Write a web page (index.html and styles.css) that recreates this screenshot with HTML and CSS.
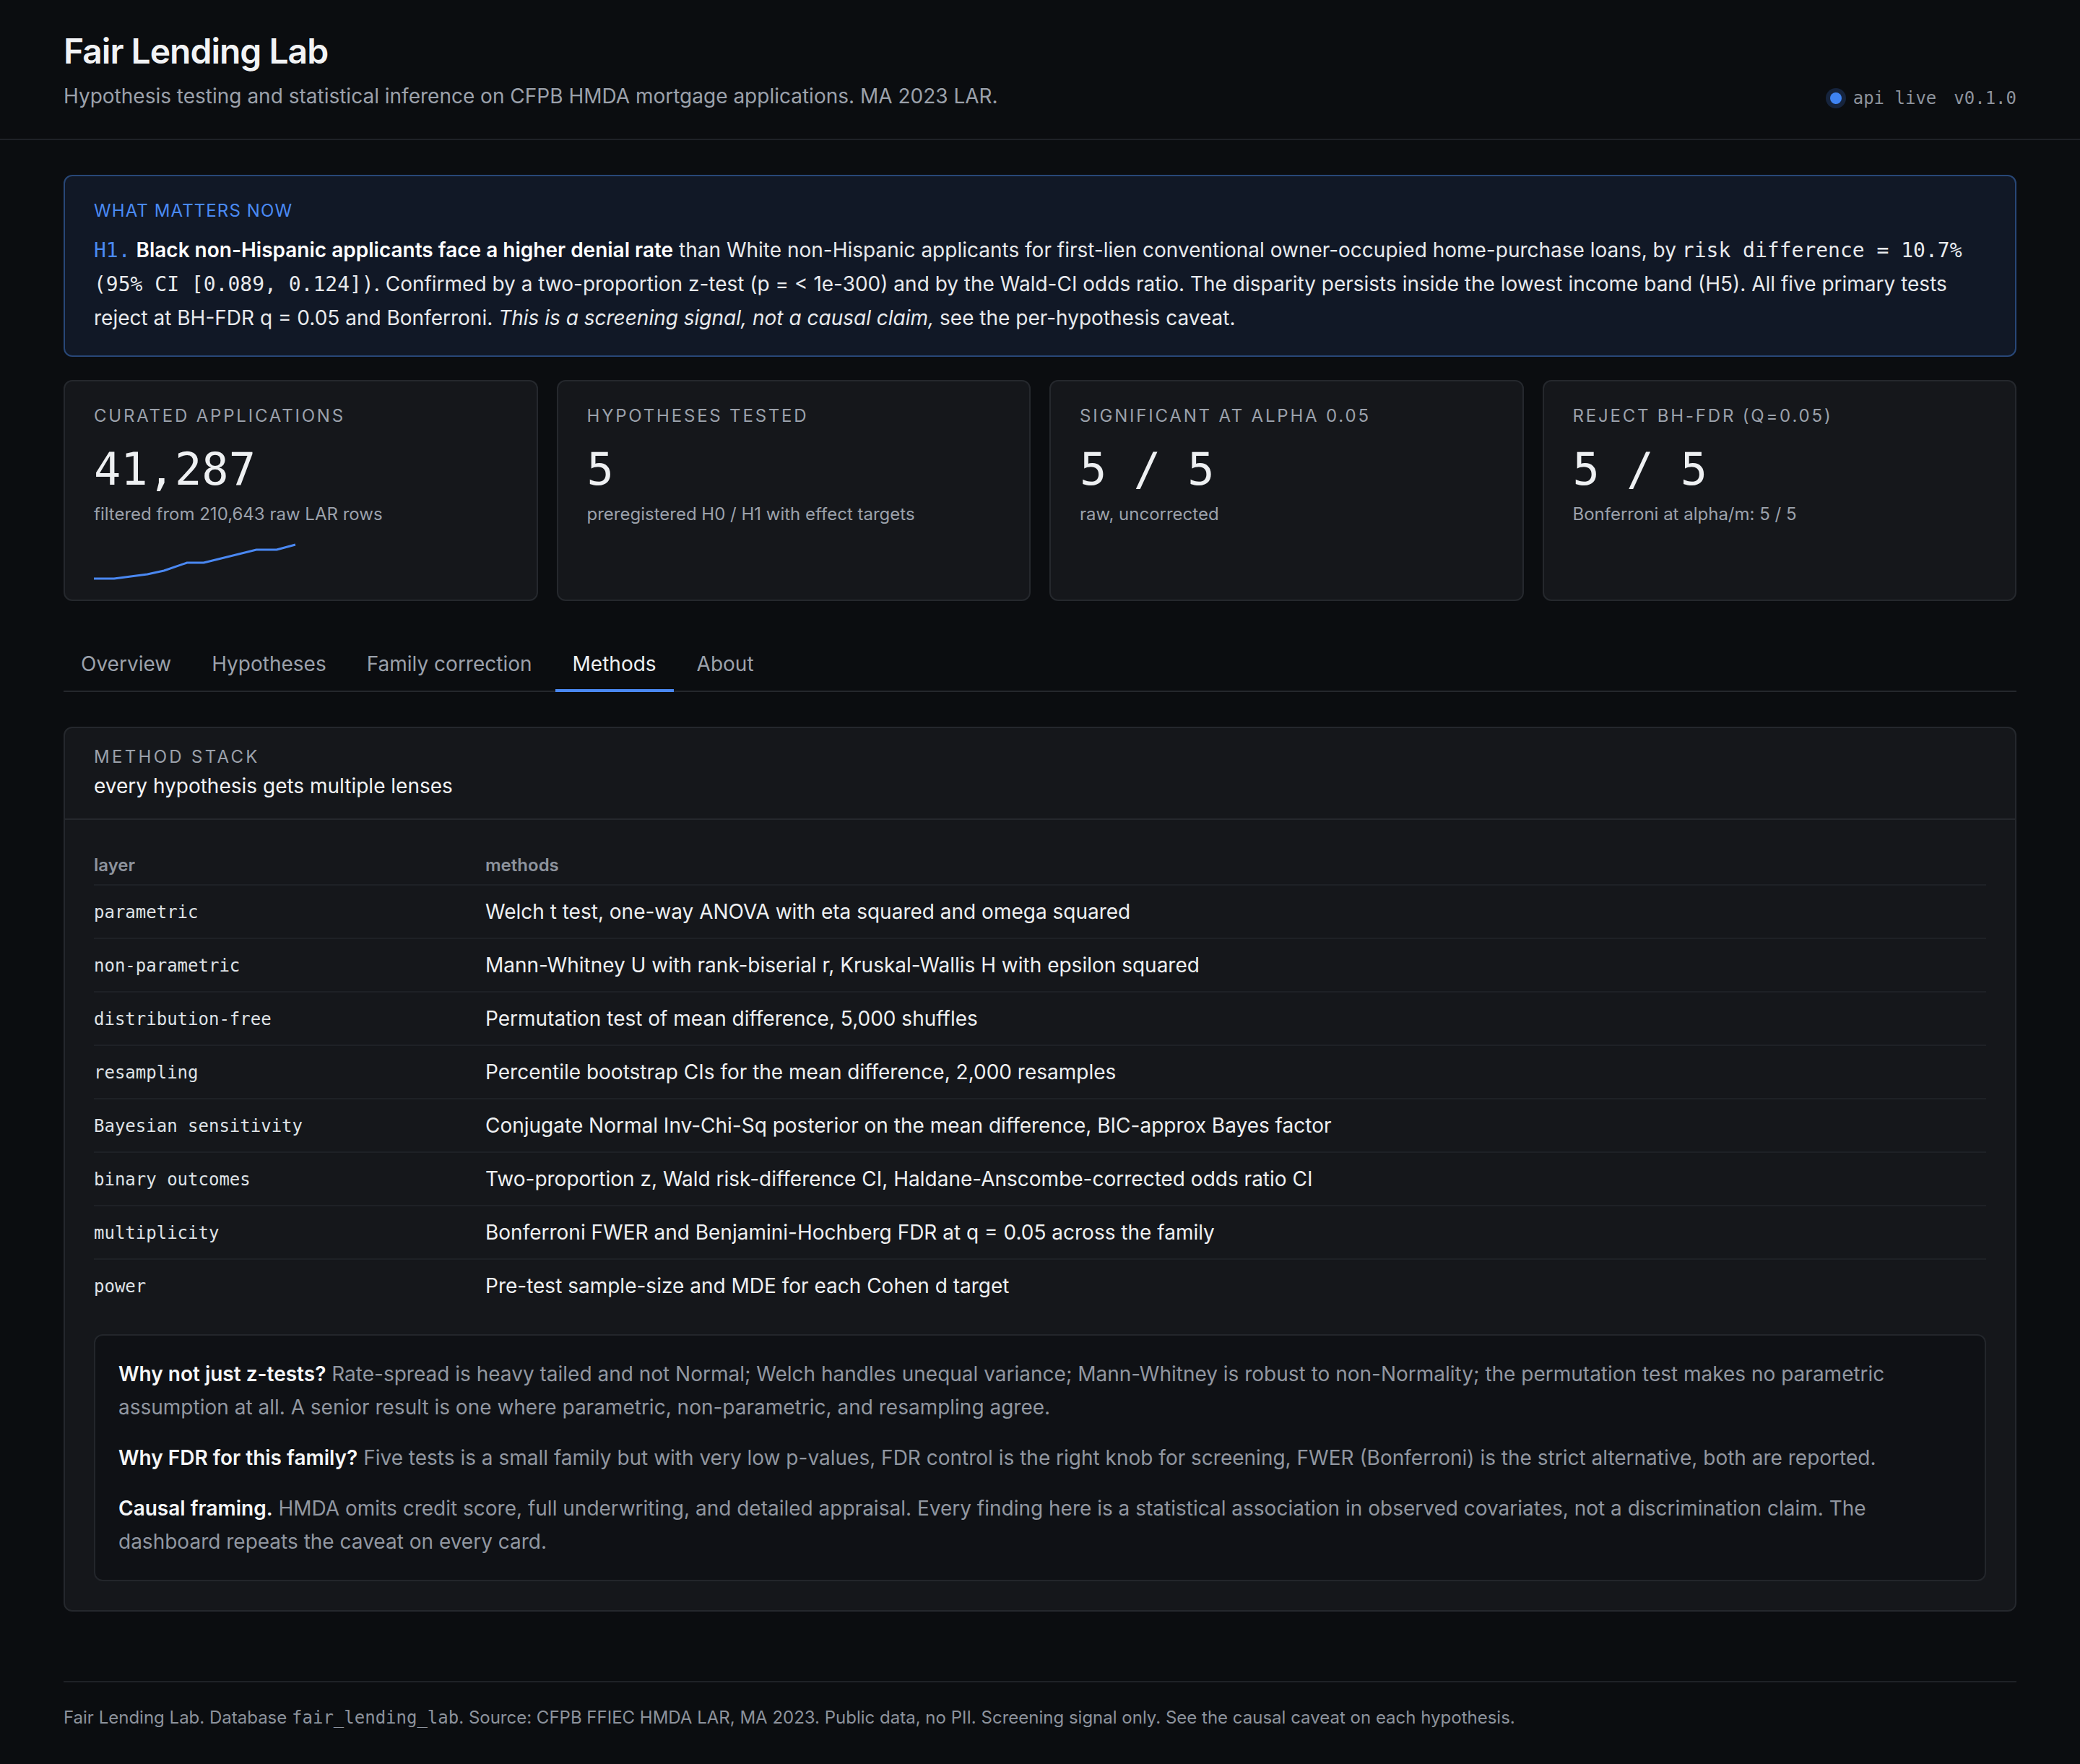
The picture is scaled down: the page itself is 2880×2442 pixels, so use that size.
FILE: index.html
```html
<!DOCTYPE html>
<html lang="en">
<head>
    <meta charset="UTF-8">
    <title>Fair Lending Lab</title>
    <link rel="stylesheet" href="styles.css">
</head>
<body>
<header class="topbar">
    <div class="brand">
        <h1>Fair Lending Lab</h1>
        <p class="sub">Hypothesis testing and statistical inference on CFPB HMDA mortgage applications. MA 2023 LAR.</p>
    </div>
    <div class="status">
        <span class="dot"></span>
        <span>api live</span>
        <span>v0.1.0</span>
    </div>
</header>

<main class="page">
    <section class="callout">
        <div class="callout-label">What matters now</div>
        <p><code class="hid">H1.</code> <strong>Black non-Hispanic applicants face a higher denial rate</strong> than White non-Hispanic applicants for first-lien conventional owner-occupied home-purchase loans, by <code>risk difference = 10.7% (95% CI [0.089, 0.124])</code>. Confirmed by a two-proportion z-test (p = &lt; 1e-300) and by the Wald-CI odds ratio. The disparity persists inside the lowest income band (H5). All five primary tests reject at BH-FDR q = 0.05 and Bonferroni. <em>This is a screening signal, not a causal claim,</em> see the per-hypothesis caveat.</p>
    </section>

    <section class="stats">
        <div class="stat">
            <div class="stat-label">Curated applications</div>
            <div class="stat-value">41,287</div>
            <div class="stat-note">filtered from 210,643 raw LAR rows</div>
            <svg class="spark" width="284" height="52" viewBox="0 0 284 52">
                <polyline points="0,49 28,49 74,43 97,38 129,27 152,27 225,9 253,9 279,2" fill="none" stroke="#4a88f2" stroke-width="3" stroke-linejoin="round"/>
            </svg>
        </div>
        <div class="stat">
            <div class="stat-label">Hypotheses tested</div>
            <div class="stat-value">5</div>
            <div class="stat-note">preregistered H0 / H1 with effect targets</div>
        </div>
        <div class="stat">
            <div class="stat-label">Significant at alpha 0.05</div>
            <div class="stat-value">5 / 5</div>
            <div class="stat-note">raw, uncorrected</div>
        </div>
        <div class="stat">
            <div class="stat-label">Reject BH-FDR (q=0.05)</div>
            <div class="stat-value">5 / 5</div>
            <div class="stat-note">Bonferroni at alpha/m: 5 / 5</div>
        </div>
    </section>

    <nav class="tabs">
        <a class="tab">Overview</a>
        <a class="tab">Hypotheses</a>
        <a class="tab">Family correction</a>
        <a class="tab active">Methods</a>
        <a class="tab">About</a>
    </nav>

    <section class="panel">
        <div class="panel-head">
            <div class="panel-label">Method stack</div>
            <div class="panel-title">every hypothesis gets multiple lenses</div>
        </div>
        <div class="panel-body">
            <table class="methods">
                <thead>
                    <tr><th class="col-layer">layer</th><th>methods</th></tr>
                </thead>
                <tbody>
                    <tr><td><code>parametric</code></td><td>Welch t test, one-way ANOVA with eta squared and omega squared</td></tr>
                    <tr><td><code>non-parametric</code></td><td>Mann-Whitney U with rank-biserial r, Kruskal-Wallis H with epsilon squared</td></tr>
                    <tr><td><code>distribution-free</code></td><td>Permutation test of mean difference, 5,000 shuffles</td></tr>
                    <tr><td><code>resampling</code></td><td>Percentile bootstrap CIs for the mean difference, 2,000 resamples</td></tr>
                    <tr><td><code>Bayesian sensitivity</code></td><td>Conjugate Normal Inv-Chi-Sq posterior on the mean difference, BIC-approx Bayes factor</td></tr>
                    <tr><td><code>binary outcomes</code></td><td>Two-proportion z, Wald risk-difference CI, Haldane-Anscombe-corrected odds ratio CI</td></tr>
                    <tr><td><code>multiplicity</code></td><td>Bonferroni FWER and Benjamini-Hochberg FDR at q = 0.05 across the family</td></tr>
                    <tr><td><code>power</code></td><td>Pre-test sample-size and MDE for each Cohen d target</td></tr>
                </tbody>
            </table>

            <div class="notes">
                <p><strong>Why not just z-tests?</strong> Rate-spread is heavy tailed and not Normal; Welch handles unequal variance; Mann-Whitney is robust to non-Normality; the permutation test makes no parametric assumption at all. A senior result is one where parametric, non-parametric, and resampling agree.</p>
                <p><strong>Why FDR for this family?</strong> Five tests is a small family but with very low p-values, FDR control is the right knob for screening, FWER (Bonferroni) is the strict alternative, both are reported.</p>
                <p><strong>Causal framing.</strong> HMDA omits credit score, full underwriting, and detailed appraisal. Every finding here is a statistical association in observed covariates, not a discrimination claim. The dashboard repeats the caveat on every card.</p>
            </div>
        </div>
    </section>
</main>

<footer class="foot">
    Fair Lending Lab. Database <code>fair_lending_lab</code>. Source: CFPB FFIEC HMDA LAR, MA 2023. Public data, no PII. Screening signal only. See the causal caveat on each hypothesis.
</footer>
</body>
</html>
```

FILE: styles.css
```css
body {
    margin: 0;
    background: #0b0d10;
    color: #e6e8eb;
    font-family: Inter, "Noto Sans", sans-serif;
    font-size: 28px;
}
code {
    font-family: "DejaVu Sans Mono", "Liberation Mono", monospace;
}

/* top bar */
.topbar {
    display: flex;
    justify-content: space-between;
    align-items: flex-end;
    padding: 42px 88px 38px;
    border-bottom: 2px solid #1f2227;
}
.topbar h1 {
    margin: 0;
    font-size: 48px;
    line-height: 1.2;
    font-weight: 600;
    letter-spacing: -1px;
    color: #f2f3f5;
}
.topbar .sub {
    margin: 12px 0 0;
    font-size: 28px;
    line-height: 42px;
    color: #9ba1ab;
}
.status {
    display: flex;
    align-items: center;
    gap: 12px;
    margin-bottom: 4px;
    font-family: "DejaVu Sans Mono", monospace;
    font-size: 24px;
    color: #8d939d;
}
.status span + span + span {
    margin-left: 12px;
}
.dot {
    width: 16px;
    height: 16px;
    border-radius: 50%;
    background: #3f84f3;
    box-shadow: 0 0 0 6px #16243d;
    margin-right: 4px;
}

.page {
    padding: 48px 88px 0;
}

/* headline callout */
.callout {
    padding: 33px 40px 29px;
    background: #111826;
    border: 2px solid #284777;
    border-radius: 12px;
}
.callout-label {
    font-size: 24px;
    line-height: 30px;
    letter-spacing: 1.1px;
    text-transform: uppercase;
    color: #4a8af4;
}
.callout p {
    margin: 16px 0 0;
    font-size: 28px;
    line-height: 46px;
    color: #e8eaed;
}
.callout code {
    font-size: 28px;
}
.callout .hid {
    color: #4a8af4;
}
.callout strong {
    font-weight: 600;
    color: #fff;
}

/* stat cards */
.stats {
    display: grid;
    grid-template-columns: repeat(4, 1fr);
    gap: 26px;
    margin-top: 32px;
}
.stat {
    padding: 33px 40px 26px;
    min-height: 240px;
    background: #15171b;
    border: 2px solid #25282d;
    border-radius: 12px;
}
.stat-label {
    font-size: 24px;
    line-height: 30px;
    letter-spacing: 2.8px;
    text-transform: uppercase;
    color: #9ba1ab;
}
.stat-value {
    margin-top: 23px;
    font-family: "DejaVu Sans Mono", monospace;
    font-size: 62px;
    line-height: 72px;
    color: #eef0f2;
}
.stat-note {
    margin-top: 8px;
    font-size: 24px;
    line-height: 36px;
    color: #9ba1ab;
}
.spark {
    display: block;
    margin-top: 22px;
}

/* tabs */
.tabs {
    display: flex;
    gap: 8px;
    margin-top: 42px;
    border-bottom: 2px solid #25282d;
}
.tab {
    padding: 24px 24px 14px;
    font-size: 28px;
    line-height: 42px;
    color: #9ba1ab;
    border-bottom: 4px solid transparent;
    margin-bottom: -2px;
}
.tab.active {
    color: #eef0f2;
    border-bottom-color: #4a88f2;
}

/* method stack panel */
.panel {
    margin-top: 48px;
    background: #15171b;
    border: 2px solid #25282d;
    border-radius: 12px;
}
.panel-head {
    padding: 25px 40px 24px;
    border-bottom: 2px solid #25282d;
}
.panel-label {
    font-size: 24px;
    line-height: 30px;
    letter-spacing: 3.3px;
    text-transform: uppercase;
    color: #9ba1ab;
}
.panel-title {
    margin-top: 4px;
    font-size: 28px;
    line-height: 42px;
    color: #f2f3f5;
}
.panel-body {
    padding: 37px 40px 40px;
}
table.methods {
    width: 100%;
    border-collapse: collapse;
}
.methods th {
    padding: 8px 0 8px;
    text-align: left;
    font-size: 24px;
    line-height: 36px;
    font-weight: 600;
    color: #8d939d;
    border-bottom: 2px solid #1e2126;
}
.methods .col-layer {
    width: 542px;
}
.methods td {
    padding: 14px 0;
    font-size: 28px;
    line-height: 42px;
    color: #eef0f2;
    border-bottom: 2px solid #1e2126;
}
.methods tr:last-child td {
    border-bottom: 0;
}
.methods td code {
    font-size: 24px;
    color: #dfe2e6;
}

.notes {
    margin-top: 31px;
    padding: 30px 32px 30px;
    background: #0f1115;
    border: 2px solid #23262b;
    border-radius: 12px;
}
.notes p {
    margin: 0 0 24px;
    font-size: 28px;
    line-height: 46px;
    color: #9197a1;
}
.notes p:last-child {
    margin-bottom: 0;
}
.notes strong {
    font-weight: 600;
    color: #f5f6f7;
}

/* footer */
.foot {
    margin: 96px 88px 0;
    padding: 31px 0 44px;
    border-top: 2px solid #1f2227;
    font-size: 24px;
    line-height: 36px;
    color: #8d939d;
}
.foot code {
    font-size: 24px;
}
```
